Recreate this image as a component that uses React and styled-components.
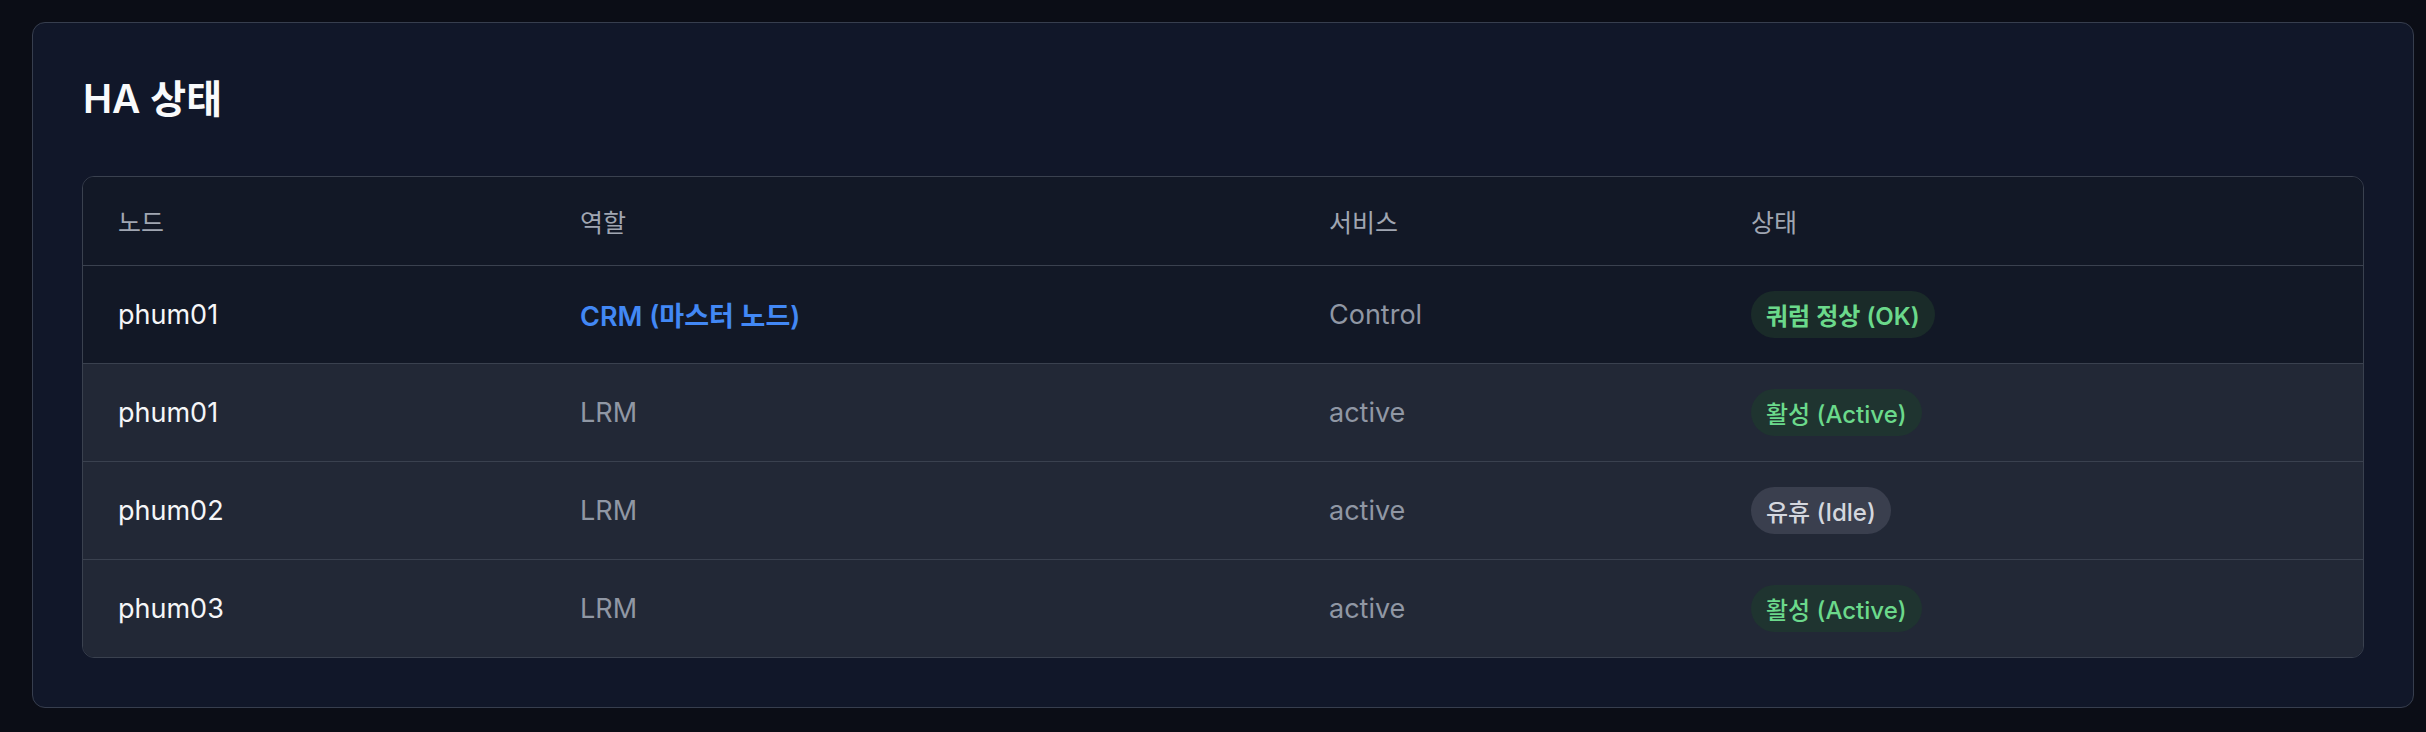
import React from 'react';
import styled, { createGlobalStyle } from 'styled-components';

const GlobalStyle = createGlobalStyle`
  html, body {
    margin: 0;
    padding: 0;
    background: #0b0d16;
  }
  body {
    font-family: "Inter", "Noto Sans CJK KR", sans-serif;
    -webkit-font-smoothing: antialiased;
  }
`;

const Page = styled.div`
  padding: 22px 12px 23px 32px;
`;

const Card = styled.section`
  background: #111729;
  border: 1px solid #373e4e;
  border-radius: 13px;
  padding: 49px;
`;

const Title = styled.h2`
  margin: 0 0 50px;
  padding-left: 1px;
  font-size: 39px;
  line-height: 54px;
  font-weight: 600;
  color: #f9fafb;
`;

const Table = styled.div`
  border: 1px solid #3a414f;
  border-radius: 12px;
  overflow: hidden;
`;

const Row = styled.div`
  display: grid;
  grid-template-columns: 462px 749px 422px 1fr;
  align-items: center;
  height: ${(p) => (p.$head ? 88 : 97)}px;
  background: ${(p) => (p.$dim ? '#222836' : '#121826')};
  border-bottom: 1px solid #3a414f;

  &:last-child {
    border-bottom: none;
  }
`;

const HeadCell = styled.div`
  padding-left: 35px;
  font-size: 25px;
  color: #a0a6b2;
`;

const Cell = styled.div`
  padding-left: 35px;
  font-size: 27px;
  font-weight: 400;
  color: ${(p) => (p.$strong ? '#f5f6f8' : '#9097a4')};
`;

const RoleLink = styled.span`
  font-weight: 600;
  color: #4288f5;
`;

const badgeTones = {
  ok: { bg: '#1a2b29', fg: '#6bd98b', weight: 600 },
  active: { bg: '#1f3430', fg: '#6bd98b', weight: 500 },
  idle: { bg: '#3a3f4e', fg: '#d4d7de', weight: 500 },
};

const Badge = styled.span`
  display: inline-flex;
  align-items: center;
  height: 47px;
  padding: 0 15px;
  border-radius: 999px;
  font-size: 24px;
  font-weight: ${(p) => badgeTones[p.$tone].weight};
  background: ${(p) => badgeTones[p.$tone].bg};
  color: ${(p) => badgeTones[p.$tone].fg};
`;

const rows = [
  { node: 'phum01', role: 'CRM (마스터 노드)', crm: true, service: 'Control', tone: 'ok', status: '쿼럼 정상 (OK)' },
  { node: 'phum01', role: 'LRM', service: 'active', tone: 'active', status: '활성 (Active)' },
  { node: 'phum02', role: 'LRM', service: 'active', tone: 'idle', status: '유휴 (Idle)' },
  { node: 'phum03', role: 'LRM', service: 'active', tone: 'active', status: '활성 (Active)' },
];

export default function App() {
  return (
    <>
      <GlobalStyle />
      <Page>
        <Card>
          <Title>HA 상태</Title>
          <Table>
            <Row $head>
              <HeadCell>노드</HeadCell>
              <HeadCell>역할</HeadCell>
              <HeadCell>서비스</HeadCell>
              <HeadCell>상태</HeadCell>
            </Row>
            {rows.map((r, i) => (
              <Row key={i} $dim={!r.crm}>
                <Cell $strong>{r.node}</Cell>
                <Cell>{r.crm ? <RoleLink>{r.role}</RoleLink> : r.role}</Cell>
                <Cell>{r.service}</Cell>
                <Cell>
                  <Badge $tone={r.tone}>{r.status}</Badge>
                </Cell>
              </Row>
            ))}
          </Table>
        </Card>
      </Page>
    </>
  );
}
